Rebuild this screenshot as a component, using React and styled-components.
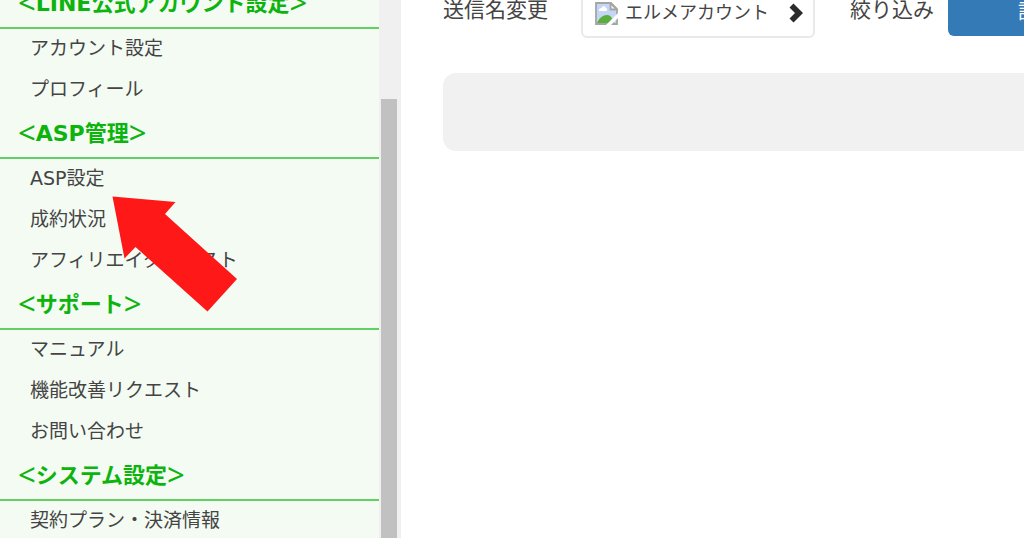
import React from 'react';
import styled, { createGlobalStyle } from 'styled-components';

const sections = [
  { title: 'LINE公式アカウント設定', items: ['アカウント設定', 'プロフィール'] },
  { title: 'ASP管理', items: ['ASP設定', '成約状況', 'アフィリエイターリスト'] },
  { title: 'サポート', items: ['マニュアル', '機能改善リクエスト', 'お問い合わせ'] },
  { title: 'システム設定', items: ['契約プラン・決済情報'] },
];

const App = () => (
  <Page>
    <GlobalStyle />
    <Sidebar>
      <Menu>
        {sections.map(({ title, items }) => (
          <section key={title}>
            <SectionTitle>
              <Bracket>&lt;</Bracket>{title}<Bracket>&gt;</Bracket>
            </SectionTitle>
            <MenuList>
              {items.map((item) => (
                <li key={item}><MenuLink href="#">{item}</MenuLink></li>
              ))}
            </MenuList>
          </section>
        ))}
      </Menu>
      <ScrollTrack><ScrollThumb /></ScrollTrack>
      <Pointer viewBox="0 0 126 116" aria-hidden="true">
        <path d="M0.5 0.5 L63.5 6 L53 18 L125 83 L95.5 115.5 L23.5 51 L12.5 62.5 Z" fill="#ff1818" />
      </Pointer>
    </Sidebar>
    <Main>
      <Toolbar>
        <ToolLabel id="sender">送信名変更</ToolLabel>
        <AccountButton type="button" aria-labelledby="sender account">
          <BrokenImage />
          <AccountName id="account">エルメアカウント</AccountName>
          <Chevron />
        </AccountButton>
        <ToolLabel>絞り込み</ToolLabel>
        <FilterButton type="button">詳細検索</FilterButton>
      </Toolbar>
      <Panel />
    </Main>
  </Page>
);

const BrokenImage = () => (
  <svg width="23" height="23" viewBox="0 0 23 23" aria-hidden="true">
    <path d="M1 1H16L22 7V22H1Z" fill="#c3d6f5" stroke="#a5a5a5" strokeWidth="1.8" />
    <path d="M4 9C3.5 7 5 6 6.500 6C7.500 3.500 10.500 4 11 6C12.500 6.500 12.500 9 11.500 9Z" fill="#fff" />
    <path d="M2 21C4 16 8 13 12 13C15 13 17 15 19 21Z" fill="#5aae3c" />
    <path d="M15.500 1V7.500H22Z" fill="#eee" stroke="#a5a5a5" strokeWidth="1.800" />
    <path d="M11 23L23 11V16L16 23Z" fill="#fff" />
  </svg>
);

const Chevron = () => (
  <svg width="14" height="20" viewBox="0 0 14 20" aria-hidden="true">
    <path d="M4.500 0.500L14 10L4.500 19.500L0.500 15.500L6 10L0.500 4.500Z" fill="#2b2b2b" />
  </svg>
);

const GlobalStyle = createGlobalStyle`
  * {
    box-sizing: border-box;
  }
  body {
    margin: 0;
    color: #444;
    background: #fff;
    font-family: 'DejaVu Sans', 'Noto Sans CJK JP', sans-serif;
  }
`;

const Page = styled.div`
  display: flex;
  height: 100vh;
  overflow: hidden;
`;
const Sidebar = styled.aside`
  position: relative;
  display: flex;
  flex: none;
  width: 401px;
  overflow: hidden;
  background-color: #f3fbf3;
`;
const Menu = styled.nav`
  flex: 1;
  margin-top: -19px;
`;
const SectionTitle = styled.h2`
  display: flex;
  height: 48px;
  margin: 0;
  padding-left: 18px;
  border-bottom: 2px solid #62cf62;
  color: #0db40d;
  font-size: 22px;
  line-height: 46px;
  white-space: nowrap;
`;
const Bracket = styled.span`
  font-family: 'Noto Sans', sans-serif;
  font-size: 31px;
  font-weight: normal;
  line-height: 42px;
`;
const MenuList = styled.ul`
  margin: 0;
  padding: 0;
  list-style: none;
`;
const MenuLink = styled.a`
  display: block;
  height: 41px;
  padding-left: 30px;
  color: inherit;
  font-size: 19px;
  line-height: 38px;
  text-decoration: none;
  white-space: nowrap;
`;
const ScrollTrack = styled.div`
  width: 22px;
  padding: 99px 4px 0 2px;
  background-color: #f0f0f0;
`;
const ScrollThumb = styled.div`
  height: 100%;
  background-color: #c1c1c1;
`;
const Pointer = styled.svg`
  position: absolute;
  top: 196px;
  left: 112px;
  width: 126px;
  height: 116px;
`;
const Main = styled.main`
  flex: 1;
  min-width: 0;
  padding-left: 42px;
  overflow: hidden;
`;
const Toolbar = styled.div`
  display: flex;
  align-items: flex-start;
  height: 73px;
`;
const ToolLabel = styled.span`
  flex: none;
  font-size: 21px;
  line-height: 20px;
`;
const AccountButton = styled.button`
  display: flex;
  flex: none;
  align-items: center;
  width: 234px;
  height: 54px;
  margin: -16px 35px 0 33px;
  padding: 4px 10px 0 12px;
  border: 2px solid #e9e9e9;
  border-radius: 6px;
  background-color: #fff;
  color: inherit;
  font-family: inherit;
  font-size: 18px;
`;
const AccountName = styled.span`
  flex: 1;
  margin-left: 7px;
  line-height: 24px;
  text-align: left;
`;
const FilterButton = styled.button`
  flex: none;
  height: 52px;
  margin: -16px 0 0 14px;
  padding: 0 70px;
  border: 0;
  border-radius: 6px;
  background-color: #337ab7;
  color: #fff;
  font-family: inherit;
  font-size: 20px;
`;
const Panel = styled.div`
  height: 78px;
  border-radius: 13px 0 0 13px;
  background-color: #f1f1f1;
`;

export default App;
